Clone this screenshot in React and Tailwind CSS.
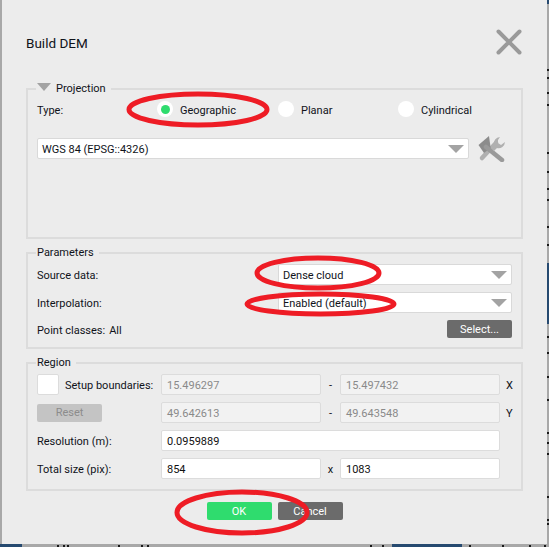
const font = { fontFamily: 'Roboto, sans-serif' };

const rightTicks = [69, 77, 92, 104, 152, 171, 188, 199, 226, 244, 336, 352, 376, 399, 432, 442, 453, 496, 519, 523];
const bottomTicks = [57, 63, 67, 118, 141, 147, 370, 382, 469, 502, 529, 544];

function Chevron() {
  return <span className="w-0 h-0 border-x-[8px] border-x-transparent border-t-[8px] border-t-[#a3a3a3]" />;
}

function Label({ children, className = "" }) {
  return <span className={`pt-[3px] whitespace-nowrap ${className}`}>{children}</span>;
}

function Select({ label, grow }) {
  return (
    <div className={`h-[21px] bg-white border border-[#d9d9d9] rounded-[2px] flex items-center justify-between pl-[4px] pr-[4px] ${grow ? "flex-1" : "w-[234px]"}`}>
      <Label>{label}</Label>
      <Chevron />
    </div>
  );
}

function Input({ value, disabled, wide }) {
  return (
    <div className={`h-[21px] border border-[#dcdcdc] rounded-[2px] flex items-center pl-[5px] pt-[2px] ${wide ? "w-[339px]" : "w-[160px]"} ${disabled ? "bg-[#f2f2f2] text-[#8a8a8a]" : "bg-white text-[#111]"}`}>
      {value}
    </div>
  );
}

function Radio({ checked, label, className }) {
  return (
    <div className={`flex items-center gap-[7px] ${className}`}>
      <span className="w-[16px] h-[16px] rounded-full bg-white flex items-center justify-center">
        {checked && <span className="w-[9px] h-[9px] rounded-full bg-[#2fdc6e]" />}
      </span>
      <Label>{label}</Label>
    </div>
  );
}

function Group({ title, triangle, className, children }) {
  return (
    <section className={`relative mx-[24px] border-2 border-[#dcdcdc] ${className}`}>
      <div className="absolute left-[8px] -top-[9px] h-[16px] bg-[#ececec] px-[1px] flex items-center gap-[5px] pr-[5px]">
        {triangle && <span className="w-0 h-0 -mt-[4px] border-x-[7px] border-x-transparent border-t-[8px] border-t-[#a3a3a3]" />}
        <span>{title}</span>
      </div>
      {children}
    </section>
  );
}

function Btn({ children, className }) {
  return <div className={`w-[65px] h-[18px] pt-[1px] rounded-[2px] flex items-center justify-center ${className}`}>{children}</div>;
}

function Ring({ x, y, w, h }) {
  return (
    <svg className="absolute pointer-events-none" style={{ left: x, top: y }} width={w} height={h}>
      <ellipse cx={w / 2} cy={h / 2} rx={w / 2 - 3} ry={h / 2 - 3} fill="none" stroke="#ee1c25" strokeWidth="5" />
    </svg>
  );
}

export default function App() {
  return (
    <div className="relative w-[549px] h-[547px] overflow-hidden bg-[#a8a8a8]" style={font}>
      <div className="absolute right-0 top-[263px] w-[2px] h-[61px] bg-[#264a70]" />
      <div className="absolute right-0 top-0 w-[2px] h-[4px] bg-[#264a70]" />
      <div className="absolute left-0 bottom-0 w-[22px] h-[3px] bg-[#264a70]" />
      <div className="absolute left-[392px] bottom-0 w-[70px] h-[3px] bg-[#264a70]" />
      {rightTicks.map((t) => (
        <div key={t} className="absolute right-0 w-[2px] h-[2px] bg-[#1a1a1a]" style={{ top: t }} />
      ))}
      {bottomTicks.map((t) => (
        <div key={t} className="absolute bottom-0 w-[2px] h-[2px] bg-[#1a1a1a]" style={{ left: t }} />
      ))}
      <div className="ml-[2px] w-[545px] h-[544px] bg-[#ececec] text-[11px] leading-[14px] text-[#10131a] flex flex-col relative">
        <header className="h-[81px] flex items-start justify-between pl-[24px] pr-[25px] pt-[34px]">
          <h1 className="text-[13.5px] leading-[18px] font-normal">Build DEM</h1>
          <svg width="26" height="26" viewBox="0 0 26 26" className="-mt-[5px]">
            <path d="M2.5 2.5 23.5 23.5M23.5 2.5 2.5 23.5" stroke="#9a9a9a" strokeWidth="4" strokeLinecap="round" />
          </svg>
        </header>
        <Group title="Projection" triangle className="h-[151px] mt-[7px] pl-[9px]">
          <div className="h-[38px] flex items-center relative">
            <Label className="w-[120px]">Type:</Label>
            <Radio checked label="Geographic" className="w-[121px]" />
            <Radio label="Planar" className="w-[120px]" />
            <Radio label="Cylindrical" />
          </div>
          <div className="flex items-start mt-[10px]">
            <div className="w-[432px] flex"><Select label="WGS 84 (EPSG::4326)" grow /></div>
            <svg width="30" height="26" viewBox="0 0 30 26" className="ml-[9px] -mt-[2px]">
              <path d="M4 22 18 7" stroke="#b0b0b0" strokeWidth="4.5" strokeLinecap="round" />
              <path d="M0.5 9 11 0 12.7 12 6 17Z" fill="#8c8c8c" />
              <path d="M8 11 24 24" stroke="#9a9a9a" strokeWidth="4.5" strokeLinecap="round" />
              <path d="M22 1a6.5 6.5 0 0 0-6 8l-3 3 3 3 3-3a6.5 6.5 0 0 0 8-6l-4 3-3-2 0-3Z" fill="#b0b0b0" />
            </svg>
          </div>
        </Group>
        <Group title="Parameters" className="h-[97px] mt-[13px] pl-[9px] pr-[9px] pt-[10px]">
          <div className="flex items-center justify-between h-[21px]"><Label>Source data:</Label><Select label="Dense cloud" /></div>
          <div className="flex items-center justify-between h-[21px] mt-[7px]"><Label>Interpolation:</Label><Select label="Enabled (default)" /></div>
          <div className="flex items-center justify-between h-[18px] mt-[7px]">
            <Label className="flex gap-[4px]"><span>Point classes:</span><span>All</span></Label>
            <Btn className="bg-[#6b6b6b] text-white">Select...</Btn>
          </div>
        </Group>
        <Group title="Region" className="h-[129px] mt-[13px] pl-[9px] pt-[10px]">
          <div className="grid grid-cols-[124px_160px_19px_160px_auto] gap-y-[7px] items-center">
            <div className="flex items-center gap-[6px] h-[21px]">
              <span className="w-[22px] h-[21px] bg-white border border-[#dcdcdc] rounded-[2px]" />
              <Label>Setup boundaries:</Label>
            </div>
            <Input value="15.496297" disabled />
            <Label className="text-center">-</Label>
            <Input value="15.497432" disabled />
            <Label className="pl-[6px]">X</Label>
            <Btn className="bg-[#c4c4c4] text-[#8c8c8c]">Reset</Btn>
            <Input value="49.642613" disabled />
            <Label className="text-center">-</Label>
            <Input value="49.643548" disabled />
            <Label className="pl-[6px]">Y</Label>
            <Label>Resolution (m):</Label>
            <div className="col-span-3"><Input value="0.0959889" wide /></div>
            <span />
            <Label>Total size (pix):</Label>
            <Input value="854" />
            <Label className="text-center">x</Label>
            <Input value="1083" />
          </div>
        </Group>
        <footer className="flex justify-center gap-[6px] mt-[11px]">
          <Btn className="bg-[#2fdc6e] text-white">OK</Btn>
          <Btn className="bg-[#6b6b6b] text-white">Cancel</Btn>
        </footer>
      </div>
      <Ring x={126} y={91} w={144} h={37} />
      <Ring x={254} y={255} w={128} h={36} />
      <Ring x={244} y={291} w={153} h={26} />
      <Ring x={174} y={489} w={136} h={47} />
    </div>
  );
}
